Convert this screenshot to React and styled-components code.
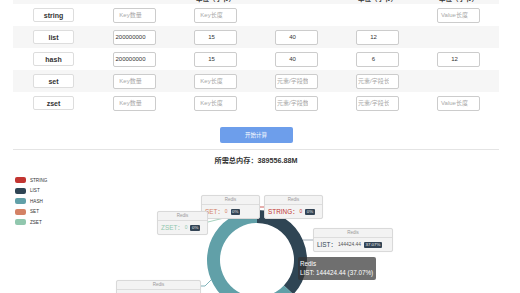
import React from 'react';
import styled, { createGlobalStyle } from 'styled-components';

const Global = createGlobalStyle`
  html, body { margin: 0; padding: 0; background: #fff; overflow: hidden; }
  body { font-family: "Liberation Sans", "Noto Sans CJK SC", sans-serif; color: #333; }
`;

const Page = styled.div`
  width: 520px;
  height: 293px;
  overflow: hidden;
`;

const Content = styled.div`
  width: 486px;
  margin: -14px 0 0 13px;
`;

const Row = styled.div`
  display: grid;
  grid-template-columns: repeat(6, 81px);
  height: ${p => p.$h || 22}px;
  align-items: center;
  background: ${p => (p.$alt ? '#f6f6f6' : '#fff')};
`;

const HeadCell = styled.div`
  text-align: center;
  font-size: 6.5px;
  line-height: 8px;
  font-weight: bold;
  color: #333;
`;

const Cell = styled.div`
  display: flex;
  justify-content: center;
  align-items: center;
`;

const TypeTag = styled.div`
  width: 41px;
  height: 14px;
  box-sizing: border-box;
  border: 1px solid #ddd;
  border-radius: 2px;
  background: #fff;
  font-size: 7px;
  font-weight: bold;
  color: #333;
  display: flex;
  align-items: center;
  justify-content: center;
`;

const Field = styled.input`
  width: 43px;
  height: 15px;
  box-sizing: border-box;
  border: 1px solid #ccc;
  border-radius: 2px;
  padding: 0 9px 0 1px;
  font-size: 6px;
  font-family: inherit;
  text-align: center;
  color: #333;
  background: #fff;
  outline: none;
  &::placeholder { color: #a8a8a8; }
`;

const CalcButton = styled.button`
  display: block;
  margin: 13px auto 0;
  width: 73px;
  height: 16px;
  border: none;
  border-radius: 2px;
  background: #6d9eeb;
  color: #fff;
  font-size: 5.5px;
  font-family: inherit;
  padding: 0;
`;

const Divider = styled.div`
  height: 1px;
  background: #e4e4e4;
  margin-top: 6px;
`;

const Total = styled.div`
  margin-top: 6px;
  height: 10px;
  line-height: 10px;
  text-align: center;
  font-size: 7.2px;
  font-weight: bold;
  color: #333;
`;

const Chart = styled.div`
  position: relative;
  margin-top: 4px;
  width: 520px;
  height: 130px;
`;

const Legend = styled.div`
  position: absolute;
  left: 15px;
  top: 7px;
  display: flex;
  flex-direction: column;
  gap: 4.6px;
`;

const LegendItem = styled.div`
  display: flex;
  align-items: center;
  height: 6px;
  gap: 4px;
  font-size: 4.6px;
  color: #333;
`;

const Swatch = styled.span`
  width: 11px;
  height: 6px;
  border-radius: 2px;
  background: ${p => p.$c};
`;

const Donut = styled.svg`
  position: absolute;
  left: 0;
  top: 0;
`;

const LabelBox = styled.div`
  position: absolute;
  left: ${p => p.$x}px;
  top: ${p => p.$y}px;
  width: ${p => p.$w}px;
  height: 24px;
  box-sizing: border-box;
  background: #f3f3f3;
  border: 1px solid #d9d9d9;
  border-radius: 2px;
  box-shadow: 0 0 1px rgba(0, 0, 0, 0.08);
  overflow: hidden;
`;

const LabelHead = styled.div`
  height: 8px;
  line-height: 8px;
  font-size: 4.5px;
  color: #999;
  text-align: center;
  border-bottom: 1px solid #ddd;
`;

const LabelBody = styled.div`
  display: flex;
  align-items: center;
  height: 13px;
  padding-left: 3px;
  white-space: nowrap;
`;

const LabelName = styled.span`
  font-size: 6.4px;
  color: ${p => p.$c};
`;

const LabelValue = styled.span`
  font-size: 4.9px;
  color: ${p => p.$c || '#555'};
  margin: 0 3px 0 1px;
`;

const Badge = styled.span`
  font-size: 4.4px;
  line-height: 5px;
  color: #eee;
  background: #334455;
  padding: 0.5px 1.5px;
  border-radius: 1px;
`;

const Tooltip = styled.div`
  position: absolute;
  left: 298px;
  top: 87px;
  width: 78px;
  height: 23px;
  box-sizing: border-box;
  background: rgba(50, 50, 50, 0.7);
  color: #fff;
  font-size: 6.3px;
  line-height: 9px;
  padding: 2px 2px;
  border-radius: 2px;
  white-space: nowrap;
`;

const COLORS = {
  STRING: '#c23531',
  LIST: '#2f4554',
  HASH: '#61a0a8',
  SET: '#d48265',
  ZSET: '#91c7ae',
};

const rows = [
  { type: 'string', cells: [['', 'Key数量'], ['', 'Key长度'], null, null, ['', 'Value长度']] },
  { type: 'list', cells: [['200000000'], ['15'], ['40'], ['12'], null] },
  { type: 'hash', cells: [['200000000'], ['15'], ['40'], ['6'], ['12']] },
  { type: 'set', cells: [['', 'Key数量'], ['', 'Key长度'], ['', '元素/字段数'], ['', '元素/字段长度'], null] },
  { type: 'zset', cells: [['', 'Key数量'], ['', 'Key长度'], ['', '元素/字段数'], ['', '元素/字段长度'], ['', 'Value长度']] },
];

function arcPath(cx, cy, r0, r1, a0, a1) {
  const rad = a => ((a - 90) * Math.PI) / 180;
  const p = (r, a) => [cx + r * Math.cos(rad(a)), cy + r * Math.sin(rad(a))];
  const large = a1 - a0 > 180 ? 1 : 0;
  const [x1, y1] = p(r1, a0);
  const [x2, y2] = p(r1, a1);
  const [x3, y3] = p(r0, a1);
  const [x4, y4] = p(r0, a0);
  return `M${x1} ${y1} A${r1} ${r1} 0 ${large} 1 ${x2} ${y2} L${x3} ${y3} A${r0} ${r0} 0 ${large} 0 ${x4} ${y4} Z`;
}

const labels = [
  { name: 'SET', value: '0', pct: '0%', x: 201, y: 25, w: 59, vc: COLORS.SET },
  { name: 'STRING', value: '0', pct: '0%', x: 264, y: 25, w: 59, vc: COLORS.STRING },
  { name: 'ZSET', value: '0', pct: '0%', x: 157, y: 41, w: 51, vc: COLORS.ZSET },
  { name: 'LIST', value: '144424.44', pct: '37.07%', x: 313, y: 58, w: 80 },
  { name: 'HASH', value: '245132.44', pct: '62.93%', x: 116, y: 110, w: 85 },
];

export default function App() {
  const cx = 257;
  const cy = 90;
  const listEnd = 0.3707 * 360;
  return (
    <Page>
      <Global />
      <Content>
        <Row $h={18} $alt>
          <HeadCell>数据类型</HeadCell>
          <HeadCell>Key数量</HeadCell>
          <HeadCell>Key长度<br />单位（字节）</HeadCell>
          <HeadCell>元素/字段数</HeadCell>
          <HeadCell>元素/字段长度<br />单位（字节）</HeadCell>
          <HeadCell>Value长度<br />单位（字节）</HeadCell>
        </Row>
        {rows.map((r, i) => (
          <Row key={r.type} $alt={i % 2 === 1}>
            <Cell><TypeTag>{r.type}</TypeTag></Cell>
            {r.cells.map((c, j) => (
              <Cell key={j}>
                {c && <Field defaultValue={c[0]} placeholder={c[1] || ''} />}
              </Cell>
            ))}
          </Row>
        ))}
        <CalcButton>开始计算</CalcButton>
        <Divider />
        <Total>所需总内存：389556.88M</Total>
      </Content>
      <Chart>
        <Legend>
          {Object.keys(COLORS).map(k => (
            <LegendItem key={k}>
              <Swatch $c={COLORS[k]} />
              {k}
            </LegendItem>
          ))}
        </Legend>
        <Donut width="520" height="130" viewBox="0 0 520 130">
          <path d={arcPath(cx, cy, 37, 50, 0, listEnd)} fill={COLORS.LIST} />
          <path d={arcPath(cx, cy, 37, 50, listEnd, 360)} fill={COLORS.HASH} />
          <polyline points="257,40 257,37 264,37" fill="none" stroke={COLORS.STRING} strokeWidth="0.8" />
          <polyline points="257,40 256,37 250,37" fill="none" stroke={COLORS.SET} strokeWidth="0.8" />
          <polyline points="257,40 232,46 208,52" fill="none" stroke={COLORS.ZSET} strokeWidth="0.8" />
          <polyline points="303,70 308,70 313,70" fill="none" stroke="#8a98a3" strokeWidth="0.8" />
          <polyline points="211,110 205,116 201,116" fill="none" stroke={COLORS.HASH} strokeWidth="0.8" />
        </Donut>
        {labels.map(l => (
          <LabelBox key={l.name} $x={l.x} $y={l.y} $w={l.w}>
            <LabelHead>Redis</LabelHead>
            <LabelBody>
              <LabelName $c={COLORS[l.name]}>{l.name}：</LabelName>
              <LabelValue $c={l.vc}>{l.value}</LabelValue>
              <Badge>{l.pct}</Badge>
            </LabelBody>
          </LabelBox>
        ))}
        <Tooltip>
          Redis<br />LIST: 144424.44 (37.07%)
        </Tooltip>
      </Chart>
    </Page>
  );
}
